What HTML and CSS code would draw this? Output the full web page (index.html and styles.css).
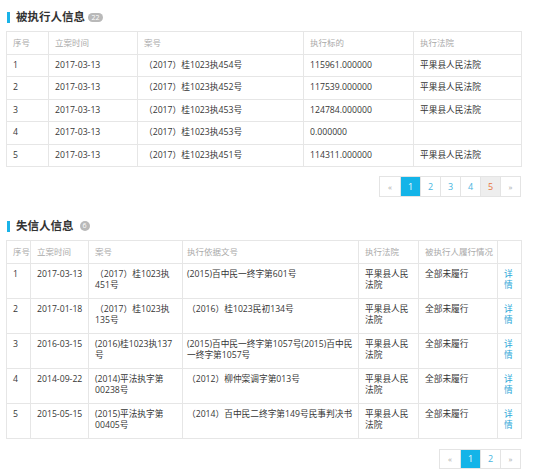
FILE: index.html
```html
<!DOCTYPE html>
<html lang="zh">
<head>
<meta charset="utf-8">
<link rel="stylesheet" href="styles.css">
</head>
<body>
<div class="page">
  <div class="section-title">
    <span class="bar"></span>
    <span class="title-text">被执行人信息</span>
    <span class="badge wide">22</span>
  </div>
  <table class="tbl t1">
    <colgroup>
      <col style="width:42px"><col style="width:89px"><col style="width:166px"><col style="width:110px"><col style="width:108px">
    </colgroup>
    <thead>
      <tr><th>序号</th><th>立案时间</th><th>案号</th><th>执行标的</th><th>执行法院</th></tr>
    </thead>
    <tbody>
      <tr><td>1</td><td>2017-03-13</td><td>（2017）桂1023执454号</td><td>115961.000000</td><td>平果县人民法院</td></tr>
      <tr><td>2</td><td>2017-03-13</td><td>（2017）桂1023执452号</td><td>117539.000000</td><td>平果县人民法院</td></tr>
      <tr><td>3</td><td>2017-03-13</td><td>（2017）桂1023执453号</td><td>124784.000000</td><td>平果县人民法院</td></tr>
      <tr><td>4</td><td>2017-03-13</td><td>（2017）桂1023执453号</td><td>0.000000</td><td></td></tr>
      <tr><td>5</td><td>2017-03-13</td><td>（2017）桂1023执451号</td><td>114311.000000</td><td>平果县人民法院</td></tr>
    </tbody>
  </table>
  <div class="pager-row">
    <ul class="pager">
      <li class="nav">«</li>
      <li class="active">1</li>
      <li>2</li>
      <li>3</li>
      <li>4</li>
      <li class="hover">5</li>
      <li class="nav">»</li>
    </ul>
  </div>

  <div class="section-title second">
    <span class="bar"></span>
    <span class="title-text">失信人信息</span>
    <span class="badge">6</span>
  </div>
  <table class="tbl t2">
    <colgroup>
      <col style="width:24px"><col style="width:58px"><col style="width:94px"><col style="width:176px"><col style="width:60px"><col style="width:79px"><col style="width:24px">
    </colgroup>
    <thead>
      <tr><th>序号</th><th>立案时间</th><th>案号</th><th class="basis">执行依据文号</th><th>执行法院</th><th>被执行人履行情况</th><th></th></tr>
    </thead>
    <tbody>
      <tr><td>1</td><td>2017-03-13</td><td>（2017）桂1023执451号</td><td class="basis">(2015)百中民一终字第601号</td><td>平果县人民法院</td><td>全部未履行</td><td><a class="link">详情</a></td></tr>
      <tr><td>2</td><td>2017-01-18</td><td>（2017）桂1023执135号</td><td class="basis">（2016）桂1023民初134号</td><td>平果县人民法院</td><td>全部未履行</td><td><a class="link">详情</a></td></tr>
      <tr><td>3</td><td>2016-03-15</td><td>(2016)桂1023执137号</td><td class="basis">(2015)百中民一终字第1057号(2015)百中民一终字第1057号</td><td>平果县人民法院</td><td>全部未履行</td><td><a class="link">详情</a></td></tr>
      <tr><td>4</td><td>2014-09-22</td><td>(2014)平法执字第00238号</td><td class="basis">（2012）柳仲案调字第013号</td><td>平果县人民法院</td><td>全部未履行</td><td><a class="link">详情</a></td></tr>
      <tr><td>5</td><td>2015-05-15</td><td>(2015)平法执字第00405号</td><td class="basis">（2014）百中民二终字第149号民事判决书</td><td>平果县人民法院</td><td>全部未履行</td><td><a class="link">详情</a></td></tr>
    </tbody>
  </table>
  <div class="pager-row">
    <ul class="pager small">
      <li class="nav">«</li>
      <li class="active">1</li>
      <li>2</li>
      <li class="nav">»</li>
    </ul>
  </div>
</div>
</body>
</html>
```

FILE: styles.css
```css
* { box-sizing: border-box; }
html, body { margin: 0; padding: 0; background: #fff; }
body {
  font-family: "Open Sans", "Noto Sans CJK SC", sans-serif;
  color: #333;
}
.page {
  width: 521px;
  padding-left: 6px;
}
.section-title {
  display: flex;
  align-items: center;
  height: 12px;
  margin-top: 11px;
  margin-bottom: 8px;
}
.section-title.second { margin-top: 23px; }
.bar {
  width: 3px;
  height: 11px;
  background: #1ab3e8;
  margin-left: 1px;
  margin-right: 6px;
}
.title-text {
  font-size: 11.5px;
  font-weight: bold;
  color: #333;
  line-height: 12px;
}
.badge {
  margin-left: 5px;
  height: 9px;
  min-width: 10px;
  border-radius: 5px;
  background: #b9b9b9;
  color: #fff;
  font-size: 7px;
  line-height: 9px;
  text-align: center;
  padding: 0 2px;
}
.badge.wide { width: 15px; margin-left: 3px; }
.section-title.second .badge { margin-left: 6px; height: 10px; width: 10px; border-radius: 50%; line-height: 10px; }

.tbl {
  width: 515px;
  table-layout: fixed;
  border-collapse: collapse;
  font-size: 8.7px;
  line-height: 11.5px;
}
.tbl th, .tbl td {
  border: 1px solid #e6e6e6;
  padding: 5px 5px 5px 6px;
  text-align: left;
  vertical-align: top;
}
.tbl th {
  font-weight: normal;
  color: #aaa;
  font-size: 8.5px;
  white-space: nowrap;
}
.tbl td { color: #363636; }
.t2 td { padding-bottom: 6px; }
.t2 .basis { padding-left: 4px; padding-right: 3px; }
.link { color: #2aa7d8; text-decoration: none; }

.pager-row {
  display: flex;
  justify-content: flex-end;
  margin-top: 9px;
}
.pager {
  display: flex;
  list-style: none;
  margin: 0;
  padding: 0;
  border: 1px solid #e4e4e4;
  height: 21px;
}
.pager li {
  width: 20px;
  height: 19px;
  line-height: 19px;
  text-align: center;
  font-size: 9px;
  color: #48b5e0;
  border-left: 1px solid #e4e4e4;
}
.pager li:first-child { border-left: none; }
.pager li.nav { color: #aaa; font-size: 8px; }
.pager li.active { background: #14b4e8; color: #fff; }
.pager li.hover { background: #eeeeee; color: #e8763e; }
.pager.small { height: 20px; margin-top: 1px; }
.pager.small li { height: 18px; line-height: 18px; }
```
